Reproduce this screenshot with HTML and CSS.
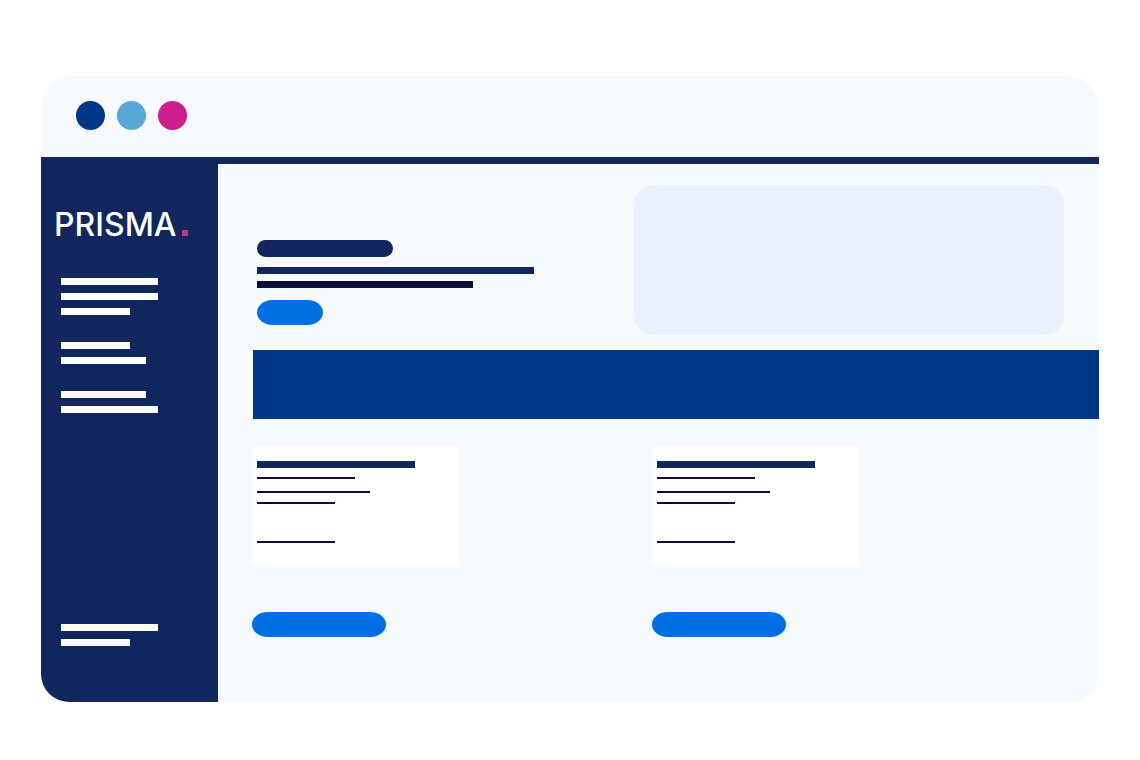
FILE: index.html
```html
<!DOCTYPE html>
<html lang="en">

<head>
    <meta charset="UTF-8">
    <meta name="viewport" content="width=device-width, initial-scale=1.0">
    <title>Prisma</title>
    <link rel="stylesheet" href="styles.css">
</head>

<body>
    <div class="window">
        <header class="titlebar">
            <span class="dot dot-navy"></span>
            <span class="dot dot-sky"></span>
            <span class="dot dot-pink"></span>
        </header>

        <div class="content">
            <aside class="sidebar">
                <div class="logo">PRISMA<span class="logo-dot"></span></div>
                <div class="menu">
                    <div class="menu-group">
                        <span class="bar bar-long"></span>
                        <span class="bar bar-long"></span>
                        <span class="bar bar-short"></span>
                    </div>
                    <div class="menu-group">
                        <span class="bar bar-short"></span>
                        <span class="bar bar-medium"></span>
                    </div>
                    <div class="menu-group">
                        <span class="bar bar-medium"></span>
                        <span class="bar bar-long"></span>
                    </div>
                    <div class="menu-group menu-footer">
                        <span class="bar bar-long"></span>
                        <span class="bar bar-short"></span>
                    </div>
                </div>
            </aside>

            <main class="main">
                <section class="hero">
                    <div class="hero-text">
                        <span class="hero-title"></span>
                        <span class="hero-line"></span>
                        <span class="hero-line hero-line-dark"></span>
                        <button class="button" type="button" aria-label="Start"></button>
                    </div>
                    <div class="hero-panel"></div>
                </section>

                <section class="banner"></section>

                <section class="cards">
                    <div class="card-column">
                        <div class="card">
                            <span class="card-title"></span>
                            <span class="line line-medium"></span>
                            <span class="line line-long"></span>
                            <span class="line line-short"></span>
                            <span class="line line-short line-last"></span>
                        </div>
                        <button class="button button-wide" type="button" aria-label="Open first card"></button>
                    </div>
                    <div class="card-column">
                        <div class="card">
                            <span class="card-title"></span>
                            <span class="line line-medium"></span>
                            <span class="line line-long"></span>
                            <span class="line line-short"></span>
                            <span class="line line-short line-last"></span>
                        </div>
                        <button class="button button-wide" type="button" aria-label="Open second card"></button>
                    </div>
                </section>
            </main>
        </div>
    </div>
</body>

</html>
```
FILE: styles.css
```css
* {
    box-sizing: border-box;
}

body {
    margin: 0;
    min-height: 100vh;
    padding: 76px 41px 58px;
    display: flex;
    background-color: #ffffff;
    font-family: Inter, sans-serif;
}

.window {
    flex: 1;
    display: flex;
    flex-direction: column;
    background-color: #f6fafd;
    border-radius: 32px 32px 28px 28px;
    overflow: hidden;
}

/* title bar */
.titlebar {
    display: flex;
    gap: 12px;
    padding: 25px 35px 27px;
    border-bottom: 7px solid #11265d;
}

.dot {
    width: 29px;
    height: 29px;
    border-radius: 50%;
}

.dot-navy {
    background-color: #003688;
}

.dot-sky {
    background-color: #57a7d8;
}

.dot-pink {
    background-color: #cd1f8b;
}

.content {
    flex: 1;
    display: flex;
}

/* sidebar */
.sidebar {
    width: 177px;
    padding: 45px 0 56px;
    display: flex;
    flex-direction: column;
    background-color: #11265d;
}

.logo {
    display: flex;
    align-items: baseline;
    gap: 5px;
    padding-left: 13px;
    color: #ffffff;
    font-size: 32px;
    font-weight: 500;
    line-height: 32px;
}

.logo-dot {
    width: 6px;
    height: 6px;
    background-color: #d2318b;
}

.menu {
    flex: 1;
    display: flex;
    flex-direction: column;
    gap: 27px;
    padding: 37px 20px 0;
}

.menu-group {
    display: flex;
    flex-direction: column;
    gap: 8px;
}

.menu-footer {
    margin-top: auto;
}

.bar {
    height: 7px;
    background-color: #ffffff;
}

.bar-long {
    width: 97px;
}

.bar-medium {
    width: 85px;
}

.bar-short {
    width: 69px;
}

/* main area */
.main {
    flex: 1;
}

.hero {
    display: grid;
    grid-template-columns: 377fr 430fr;
    padding: 21px 35px 15px 39px;
}

.hero-text {
    display: flex;
    flex-direction: column;
    align-items: flex-start;
    padding-top: 55px;
}

.hero-title {
    width: 136px;
    height: 17px;
    margin-bottom: 10px;
    border-radius: 9px;
    background-color: #11265d;
}

.hero-line {
    width: 277px;
    height: 7px;
    margin-bottom: 7px;
    background-color: #11265d;
}

.hero-line-dark {
    width: 216px;
    margin-bottom: 12px;
    background-color: #0f0c37;
}

.hero-panel {
    height: 150px;
    border-radius: 19px;
    background-color: #eaf1fc;
}

.button {
    width: 66px;
    height: 25px;
    padding: 0;
    border: none;
    border-radius: 16px / 13px;
    background-color: #006fe4;
    cursor: pointer;
}

.button-wide {
    width: 134px;
}

.banner {
    height: 69px;
    margin-left: 35px;
    background-color: #003688;
}

.cards {
    display: grid;
    grid-template-columns: 1fr 1fr;
    padding: 28px 47px 28px 34px;
}

.card-column {
    display: flex;
    flex-direction: column;
    align-items: flex-start;
    gap: 47px;
}

.card {
    display: flex;
    flex-direction: column;
    width: 207px;
    height: 118px;
    padding: 14px 5px;
    background-color: #ffffff;
}

.card-title {
    width: 158px;
    height: 7px;
    margin-bottom: 9px;
    background-color: #11265d;
}

.line {
    height: 2px;
    background-color: #0f0c37;
}

.line-medium {
    width: 98px;
    margin-bottom: 12px;
}

.line-long {
    width: 113px;
    margin-bottom: 9px;
}

.line-short {
    width: 78px;
}

.line-last {
    margin-top: 37px;
}
```
